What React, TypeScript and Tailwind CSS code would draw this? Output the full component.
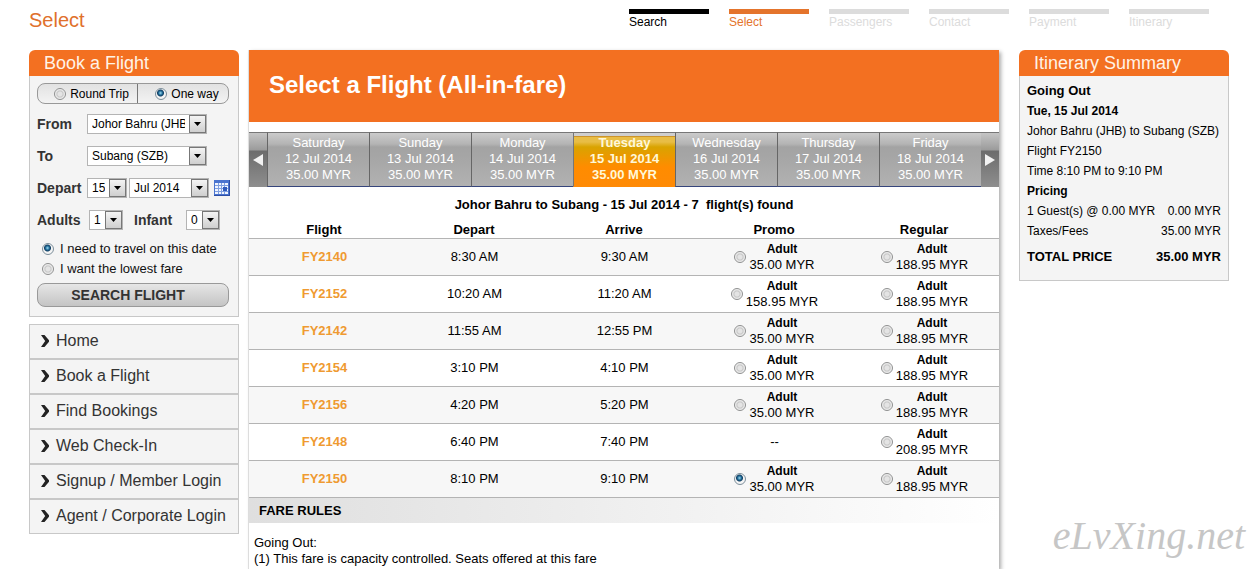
import { useState } from "react";
import type { ReactNode } from "react";

const steps = [
  { name: "Search", bar: "bg-black", text: "text-black" },
  { name: "Select", bar: "bg-[#e4742c]", text: "text-[#e4742c]" },
  { name: "Passengers", bar: "bg-[#dcdcdc]", text: "text-[#dcdcdc]" },
  { name: "Contact", bar: "bg-[#dcdcdc]", text: "text-[#dcdcdc]" },
  { name: "Payment", bar: "bg-[#dcdcdc]", text: "text-[#dcdcdc]" },
  { name: "Itinerary", bar: "bg-[#dcdcdc]", text: "text-[#dcdcdc]" },
];

const days = [
  ["Saturday", "12 Jul 2014"],
  ["Sunday", "13 Jul 2014"],
  ["Monday", "14 Jul 2014"],
  ["Tuesday", "15 Jul 2014"],
  ["Wednesday", "16 Jul 2014"],
  ["Thursday", "17 Jul 2014"],
  ["Friday", "18 Jul 2014"],
];

const flights = [
  { code: "FY2140", depart: "8:30 AM", arrive: "9:30 AM", promo: "35.00 MYR", regular: "188.95 MYR" },
  { code: "FY2152", depart: "10:20 AM", arrive: "11:20 AM", promo: "158.95 MYR", regular: "188.95 MYR" },
  { code: "FY2142", depart: "11:55 AM", arrive: "12:55 PM", promo: "35.00 MYR", regular: "188.95 MYR" },
  { code: "FY2154", depart: "3:10 PM", arrive: "4:10 PM", promo: "35.00 MYR", regular: "188.95 MYR" },
  { code: "FY2156", depart: "4:20 PM", arrive: "5:20 PM", promo: "35.00 MYR", regular: "188.95 MYR" },
  { code: "FY2148", depart: "6:40 PM", arrive: "7:40 PM", promo: "", regular: "208.95 MYR" },
  { code: "FY2150", depart: "8:10 PM", arrive: "9:10 PM", promo: "35.00 MYR", regular: "188.95 MYR" },
];

const links = [
  "Home",
  "Book a Flight",
  "Find Bookings",
  "Web Check-In",
  "Signup / Member Login",
  "Agent / Corporate Login",
];

type RadioProps = { id: string; name: string; checked: boolean; onSelect: () => void };

function Radio({ id, name, checked, onSelect }: RadioProps) {
  return (
    <input
      type="radio"
      id={id}
      name={name}
      checked={checked}
      onChange={onSelect}
      className="size-3 shrink-0 appearance-none rounded-full border border-[#8e8f8f] bg-[radial-gradient(circle,#e4e4e4_0_2px,#c9c9c9_3px,#f8f8f8_5px)] checked:border-[#7d8f9b] checked:bg-[radial-gradient(circle_at_45%_40%,#9fdcf2_0,#1f6a96_2px,#123f63_3px,#f4f4f4_4px)]"
    />
  );
}

type SelectProps = { id: string; options: string[]; className: string; label?: string };

function Select({ id, options, className, label }: SelectProps) {
  return (
    <div className={`relative h-5 ${className}`}>
      <select
        id={id}
        aria-label={label}
        className="block h-full w-full appearance-none overflow-hidden border border-[#b4b4b4] bg-white pl-1 pr-[21px] text-xs leading-4 text-black"
      >
        {options.map((o) => (
          <option key={o}>{o}</option>
        ))}
      </select>
      <span className="pointer-events-none absolute inset-y-px right-px flex w-[17px] items-center justify-center border border-[#777] bg-linear-to-b from-[#f4f4f4] to-[#cfcfcf]">
        <svg viewBox="0 0 7 4" className="h-1 w-[7px]" aria-hidden="true">
          <path d="M0 0h7L3.5 4z" fill="#000" />
        </svg>
      </span>
    </div>
  );
}

function PanelTitle({ children }: { children: ReactNode }) {
  return (
    <h2 className="h-[26px] rounded-t-md bg-[#f37021] pl-[15px] text-lg leading-[26px] text-[#fff3e6]">
      {children}
    </h2>
  );
}

function FieldLabel({ htmlFor, children }: { htmlFor: string; children: ReactNode }) {
  return (
    <label htmlFor={htmlFor} className="w-[50px] shrink-0 text-sm leading-5 font-bold text-[#333]">
      {children}
    </label>
  );
}

function CalendarIcon() {
  return (
    <svg viewBox="0 0 16 16" className="size-4" aria-hidden="true">
      <rect width="16" height="16" fill="#4a74cf" />
      <rect x="1" y="3" width="13" height="11" fill="#eef4ff" />
      <path d="M1 5.5h13M1 8.5h13M1 11.5h13M4.5 3v11M7.5 3v11M10.5 3v11" stroke="#7f9fe0" />
      <rect x="9" y="7" width="4" height="4" fill="#2f5bbd" />
      <path d="M15.5 0v16M0 15.500h16" stroke="#2c4ea6" />
    </svg>
  );
}

function BookingForm() {
  const [trip, setTrip] = useState("oneway");
  const [search, setSearch] = useState("date");
  return (
    <section>
      <PanelTitle>Book a Flight</PanelTitle>
      <form
        onSubmit={(e) => e.preventDefault()}
        className="border border-t-0 border-[#c8c8c8] bg-[#f4f4f4] px-[7px] pt-[7px] pb-[9px]"
      >
        <div className="mr-0.5 flex h-[21px] rounded-lg border border-[#999] bg-linear-to-b from-[#e2e2e2] to-[#f3f3f3] text-xs leading-5">
          <div className="flex w-[100px] items-center justify-center gap-1 border-r border-[#777] pl-2">
            <Radio id="round" name="trip" checked={trip === "round"} onSelect={() => setTrip("round")} />
            <label htmlFor="round">Round Trip</label>
          </div>
          <div className="flex flex-1 items-center justify-center gap-1 pl-2">
            <Radio id="oneway" name="trip" checked={trip === "oneway"} onSelect={() => setTrip("oneway")} />
            <label htmlFor="oneway">One way</label>
          </div>
        </div>
        <div className="mt-[10px] flex items-center">
          <FieldLabel htmlFor="from">From</FieldLabel>
          <Select id="from" options={["Johor Bahru (JHB)", "Subang (SZB)"]} className="w-[120px]" />
        </div>
        <div className="mt-3 flex items-center">
          <FieldLabel htmlFor="to">To</FieldLabel>
          <Select id="to" options={["Subang (SZB)", "Johor Bahru (JHB)"]} className="w-[120px]" />
        </div>
        <div className="mt-3 flex items-center">
          <FieldLabel htmlFor="day">Depart</FieldLabel>
          <Select id="day" options={["15", "16", "17"]} className="w-10" />
          <Select id="month" label="Month" options={["Jul 2014", "Aug 2014"]} className="ml-0.5 w-20" />
          <button type="button" aria-label="Open calendar" className="ml-[5px]">
            <CalendarIcon />
          </button>
        </div>
        <div className="mt-3 flex items-center">
          <FieldLabel htmlFor="adults">Adults</FieldLabel>
          <Select id="adults" options={["1", "2", "3"]} className="ml-0.5 w-[34px]" />
          <div className="ml-[11px] flex items-center gap-0.5">
            <FieldLabel htmlFor="infant">Infant</FieldLabel>
            <Select id="infant" options={["0", "1", "2"]} className="w-[34px]" />
          </div>
        </div>
        <div className="mt-[9px] flex flex-col pl-[5px] text-[13px] leading-5 text-[#111]">
          <div className="flex items-center gap-1.5">
            <Radio id="exact" name="search" checked={search === "date"} onSelect={() => setSearch("date")} />
            <label htmlFor="exact" className="whitespace-nowrap">
              I need to travel on this date
            </label>
          </div>
          <div className="flex items-center gap-1.5">
            <Radio id="lowest" name="search" checked={search === "fare"} onSelect={() => setSearch("fare")} />
            <label htmlFor="lowest">I want the lowest fare</label>
          </div>
        </div>
        <div className="mt-1 mr-0.5 flex">
          <button
            type="submit"
            className="h-6 flex-1 rounded-lg border border-[#999] bg-linear-to-b from-[#e6e6e6] to-[#c4c4c4] pr-[10px] text-sm leading-5 font-bold text-[#333]"
          >
            SEARCH FLIGHT
          </button>
        </div>
      </form>
    </section>
  );
}

function SideNav() {
  return (
    <nav className="mt-[7px] border border-[#c8c8c8] bg-[#f4f4f4]">
      <ul className="divide-y-2 divide-[#c8c8c8]">
        {links.map((l) => (
          <li key={l}>
            <a
              href="#"
              className="flex h-[33px] items-center gap-[7px] pb-0.5 pl-[11px] text-base whitespace-nowrap text-[#333]"
            >
              <svg viewBox="0 0 8 12" className="h-3 w-2 shrink-0" aria-hidden="true">
                <path d="M0 0h3.500L8 5.200v1.600L3.500 12H0l4.200-6z" fill="#222" />
              </svg>
              {l}
            </a>
          </li>
        ))}
      </ul>
    </nav>
  );
}

function ArrowButton({ label, d }: { label: string; d: string }) {
  return (
    <button
      type="button"
      aria-label={label}
      className="flex w-[18px] shrink-0 items-center justify-center border-t border-[#777] bg-[linear-gradient(#c4c4c4,#9b9b9b_17px,#6c6c6c_18px,#8e8e8e)]"
    >
      <svg viewBox="0 0 10 12" className="h-3 w-[10px]" aria-hidden="true">
        <path d={d} fill="#f2f2f2" />
      </svg>
    </button>
  );
}

function DayStrip() {
  return (
    <div className="mt-[10px] flex h-[55px] text-[13px] leading-4">
      <ArrowButton label="Previous days" d="M10 0v12L0 6z" />
      <div className="grid flex-1 grid-cols-7">
        {days.map(([name, date]) => {
          const active = name === "Tuesday";
          return (
            <button
              type="button"
              key={name}
              className={
                active
                  ? "flex flex-col items-center justify-center border-t border-b border-l border-t-[#777] border-b-[#ff8a05] border-l-[#777] bg-[linear-gradient(#cfcfcf_3px,#b06a10_3px,#e8bd45_4px,#e8bd45_9px,#d9a300_14px,#ff8c00_34px,#ff8a05)] pb-0.5 font-bold text-[#fff8d8]"
                  : "flex flex-col items-center justify-center border-t border-b border-l border-t-[#777] border-b-[#36457c] border-l-[#666] bg-[linear-gradient(#cbcbcb,#b4b4b4_11px,#a3a3a3_14px,#a6a6a6_25px,#b2b2b2)] pb-0.5 text-white"
              }
            >
              <span>{name}</span>
              <span>{date}</span>
              <span>35.00 MYR</span>
            </button>
          );
        })}
      </div>
      <ArrowButton label="Next days" d="M0 0v12l10-6z" />
    </div>
  );
}

function FlightTable() {
  const [fare, setFare] = useState("FY2150-promo");

  const fareCell = (id: string, price: string) =>
    price ? (
      <div className="flex items-center justify-center gap-[3px]">
        <Radio id={id} name="fare" checked={fare === id} onSelect={() => setFare(id)} />
        <label htmlFor={id} className="text-center">
          <b className="block text-xs leading-4">Adult</b>
          <span className="block">{price}</span>
        </label>
      </div>
    ) : (
      "--"
    );

  return (
    <table className="w-full table-fixed border-separate border-spacing-0 text-center text-[13px] leading-4">
      <caption className="h-[35px] text-[13px] leading-[35px] font-bold whitespace-pre">
        {"Johor Bahru to Subang - 15 Jul 2014 - 7  flight(s) found"}
      </caption>
      <thead>
        <tr>
          {["Flight", "Depart", "Arrive", "Promo", "Regular"].map((h) => (
            <th key={h} scope="col" className="border-b border-[#b4b4b4] p-0 font-bold">
              {h}
            </th>
          ))}
        </tr>
      </thead>
      <tbody>
        {flights.map((f) => (
          <tr
            key={f.code}
            className="h-[37px] odd:bg-[#f7f7f7] [&>td]:border-b [&>td]:border-[#b4b4b4] [&>td]:p-0 [&>td]:pl-px"
          >
            <td className="font-bold text-[#ef9a31]">{f.code}</td>
            <td>{f.depart}</td>
            <td>{f.arrive}</td>
            <td>{fareCell(`${f.code}-promo`, f.promo)}</td>
            <td>{fareCell(`${f.code}-regular`, f.regular)}</td>
          </tr>
        ))}
      </tbody>
    </table>
  );
}

function Summary() {
  return (
    <aside className="w-[210px] shrink-0">
      <PanelTitle>Itinerary Summary</PanelTitle>
      <div className="border border-t-0 border-[#c8c8c8] bg-[#f4f4f4] px-[7px] pt-[5px] pb-[13px] text-xs leading-5 whitespace-nowrap">
        <h3 className="text-[13px] leading-5 font-bold">Going Out</h3>
        <p className="font-bold">Tue, 15 Jul 2014</p>
        <p>Johor Bahru (JHB) to Subang (SZB)</p>
        <p>Flight FY2150</p>
        <p>Time 8:10 PM to 9:10 PM</p>
        <h3 className="font-bold">Pricing</h3>
        <p className="flex justify-between">
          <span>1 Guest(s) @ 0.00 MYR</span>
          <span>0.00 MYR</span>
        </p>
        <p className="flex justify-between">
          <span>Taxes/Fees</span>
          <span>35.00 MYR</span>
        </p>
        <p className="mt-[6px] flex justify-between text-[13px] leading-5 font-bold">
          <span>TOTAL PRICE</span>
          <span>35.00 MYR</span>
        </p>
      </div>
    </aside>
  );
}

export default function App() {
  return (
    <div className="relative flex min-h-screen flex-col bg-white pr-7 pl-[29px] font-['Liberation_Sans',Arial,sans-serif] text-black">
      <header className="flex h-[50px] items-start justify-between">
        <h1 className="pt-2 text-xl leading-6 text-[#e0702c]">Select</h1>
        <ol className="mr-5 flex gap-5 pt-[9px]">
          {steps.map((s) => (
            <li key={s.name} className="w-20">
              <div className={`h-[5px] ${s.bar}`} />
              <span className={`block text-xs leading-4 ${s.text}`}>{s.name}</span>
            </li>
          ))}
        </ol>
      </header>
      <div className="flex flex-1">
        <div className="w-[210px] shrink-0">
          <BookingForm />
          <SideNav />
        </div>
        <main className="mr-5 ml-[10px] min-w-0 flex-1 shadow-[2px_2px_4px_#aaa,-1px_0_0_#e4e4e4]">
          <h2 className="h-[72px] bg-[#f37021] pl-5 text-2xl leading-[70px] font-bold text-white">
            Select a Flight (All-in-fare)
          </h2>
          <DayStrip />
          <FlightTable />
          <h3 className="bg-linear-to-r from-[#dfdfdf] to-white pl-[10px] text-[13px] leading-[25px] font-bold">
            FARE RULES
          </h3>
          <div className="px-[5px] pt-3 text-[13px] leading-4">
            <p>Going Out:</p>
            <p>(1) This fare is capacity controlled. Seats offered at this fare</p>
          </div>
        </main>
        <Summary />
      </div>
      <div className="absolute right-3 bottom-2 font-['Liberation_Serif',serif] text-[40px] leading-[50px] text-[#c6c6c6] italic">
        eLvXing.net
      </div>
    </div>
  );
}
